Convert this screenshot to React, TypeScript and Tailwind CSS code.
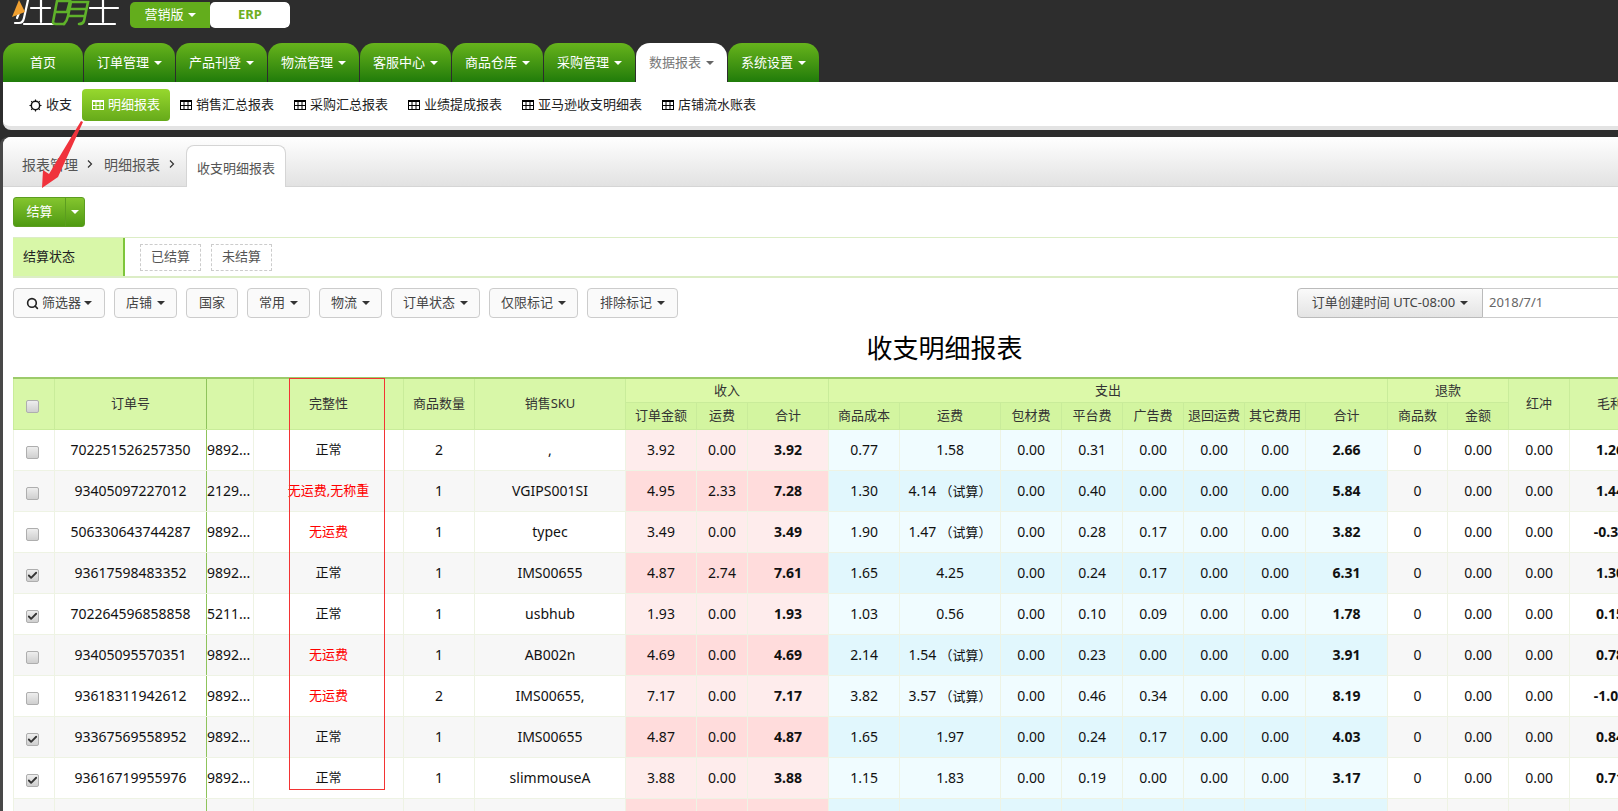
import { Check, Search } from "lucide-react";

const NAV = ["订单管理", "产品刊登", "物流管理", "客服中心", "商品仓库", "采购管理", "数据报表", "系统设置"];
const SUB = ["销售汇总报表", "采购汇总报表", "业绩提成报表", "亚马逊收支明细表", "店铺流水账表"];

const FILTERS = [
  { label: "店铺", w: "w-[63px]", caret: true },
  { label: "国家", w: "w-[52px]", caret: false },
  { label: "常用", w: "w-[63px]", caret: true },
  { label: "物流", w: "w-[63px]", caret: true },
  { label: "订单状态", w: "w-[89px]", caret: true },
  { label: "仅限标记", w: "w-[89px]", caret: true },
  { label: "排除标记", w: "w-[91px]", caret: true },
];

const ROWS = [
  { checked: false, order: "702251526257350", id: "9892...", status: "正常", qty: "2", sku: ",", income: ["3.92", "0.00", "3.92"], cost: "0.77", ship: "1.58", est: false, fees: ["0.00", "0.31", "0.00", "0.00", "0.00"], out: "2.66", profit: "1.26" },
  { checked: false, order: "93405097227012", id: "2129...", status: "无运费,无称重", qty: "1", sku: "VGIPS001SI", income: ["4.95", "2.33", "7.28"], cost: "1.30", ship: "4.14", est: true, fees: ["0.00", "0.40", "0.00", "0.00", "0.00"], out: "5.84", profit: "1.44" },
  { checked: false, order: "506330643744287", id: "9892...", status: "无运费", qty: "1", sku: "typec", income: ["3.49", "0.00", "3.49"], cost: "1.90", ship: "1.47", est: true, fees: ["0.00", "0.28", "0.17", "0.00", "0.00"], out: "3.82", profit: "-0.33" },
  { checked: true, order: "93617598483352", id: "9892...", status: "正常", qty: "1", sku: "IMS00655", income: ["4.87", "2.74", "7.61"], cost: "1.65", ship: "4.25", est: false, fees: ["0.00", "0.24", "0.17", "0.00", "0.00"], out: "6.31", profit: "1.30" },
  { checked: true, order: "702264596858858", id: "5211...", status: "正常", qty: "1", sku: "usbhub", income: ["1.93", "0.00", "1.93"], cost: "1.03", ship: "0.56", est: false, fees: ["0.00", "0.10", "0.09", "0.00", "0.00"], out: "1.78", profit: "0.15" },
  { checked: false, order: "93405095570351", id: "9892...", status: "无运费", qty: "1", sku: "AB002n", income: ["4.69", "0.00", "4.69"], cost: "2.14", ship: "1.54", est: true, fees: ["0.00", "0.23", "0.00", "0.00", "0.00"], out: "3.91", profit: "0.78" },
  { checked: false, order: "93618311942612", id: "9892...", status: "无运费", qty: "2", sku: "IMS00655,", income: ["7.17", "0.00", "7.17"], cost: "3.82", ship: "3.57", est: true, fees: ["0.00", "0.46", "0.34", "0.00", "0.00"], out: "8.19", profit: "-1.02" },
  { checked: true, order: "93367569558952", id: "9892...", status: "正常", qty: "1", sku: "IMS00655", income: ["4.87", "0.00", "4.87"], cost: "1.65", ship: "1.97", est: false, fees: ["0.00", "0.24", "0.17", "0.00", "0.00"], out: "4.03", profit: "0.84" },
  { checked: true, order: "93616719955976", id: "9892...", status: "正常", qty: "1", sku: "slimmouseA", income: ["3.88", "0.00", "3.88"], cost: "1.15", ship: "1.83", est: false, fees: ["0.00", "0.19", "0.00", "0.00", "0.00"], out: "3.17", profit: "0.71" },
];

const TH = "border border-[#c9ec9a] text-[13px] font-normal text-[#333] p-0";
const CELL = "border border-[#eef3e4] p-0 whitespace-nowrap overflow-hidden";
const TD = `${CELL} text-center text-[14px] text-[#111]`;
const LINE = "border-r-[#8fc45c]";

function Caret({ color = "border-t-white" }: { color?: string }) {
  return <span className={`inline-block border-x-[4px] border-t-[4px] border-x-transparent ${color}`} />;
}

function Chevron() {
  return (
    <svg viewBox="0 0 6 8" className="ml-[9px] mr-[11px] h-[8px] w-[6px]" fill="none" stroke="#333" strokeWidth="1.2">
      <path d="M1 0.5L4.5 4L1 7.5" />
    </svg>
  );
}

function TableIcon({ className }: { className: string }) {
  return (
    <svg viewBox="0 0 12 10" className={`h-[10px] w-[12px] ${className}`} fill="none" stroke="currentColor">
      <rect x="0.5" y="0.5" width="11" height="9" />
      <path d="M0 1.5H12M0 5.5H12M4 2V10M8 2V10" />
    </svg>
  );
}

function Logo() {
  return (
    <svg viewBox="0 0 130 34" className="h-[34px] w-[130px]" fill="none" strokeLinecap="round">
      <g stroke="#ffffff" strokeWidth="2.2">
        <path d="M28 0 L24 18 Q23 23 19 23 L15 23" />
        <path d="M21 8 L17 18" />
        <path d="M31 8 H50 M41 0 V22 M24 24 H54" />
        <path d="M90 8 H118 M103 0 V22 M89 24 H115" />
      </g>
      <g stroke="#5fb22a" strokeWidth="2.6">
        <path d="M57 1 H70 L67 12 H55 M57 1 L53 22 Q53 24 56 24 H64" />
        <path d="M72 2 H88 L84 21 Q83 24 79 24 M71 2 L68 16 Q67 21 64 24 M70 9 H86 M69 16 H84" />
      </g>
      <path d="M12 17 L19 0 L25 12 Z" fill="#f0a030" stroke="none" />
    </svg>
  );
}

function Box({ checked }: { checked: boolean }) {
  return (
    <span className="mr-[3px] mt-[3px] inline-flex h-[13px] w-[13px] items-center justify-center rounded-[2px] border border-[#aeaeae] bg-gradient-to-b from-[#eeeeee] to-[#cfcfcf] align-middle">
      {checked && <Check size={11} strokeWidth={4} className="text-[#333]" />}
    </span>
  );
}

export default function App() {
  return (
    <div className="relative flex h-[811px] w-[1618px] flex-col overflow-hidden bg-[#2d2d2d] font-['Noto_Sans','Noto_Sans_CJK_SC',sans-serif] text-[13px]">
      {/* ---- Top bar ---- */}
      <div className="flex h-[43px] shrink-0 items-start">
        <Logo />
        <div className="mt-[2px] flex h-[26px] w-[160px] overflow-hidden rounded-[5px]">
          <div className="flex w-[80px] items-center justify-center gap-[4px] bg-[#63ad1c] text-white">
            营销版 <Caret />
          </div>
          <div className="flex w-[80px] items-center justify-center rounded-[5px] bg-white font-bold text-[#6fae22]">
            ERP
          </div>
        </div>
      </div>

      {/* ---- Main nav ---- */}
      <div className="flex h-[39px] shrink-0 gap-[1px] pl-[3px]">
        <div className="flex w-[80px] items-center justify-center rounded-t-[14px] bg-gradient-to-b from-[#66b31c] to-[#1f7c0a] text-white">
          首页
        </div>
        {NAV.map((label) =>
          label === "数据报表" ? (
            <div key={label} className="flex w-[91px] items-center justify-center gap-[5px] rounded-t-[14px] bg-white text-[#777]">
              {label} <Caret color="border-t-[#666]" />
            </div>
          ) : (
            <div key={label} className="flex w-[91px] items-center justify-center gap-[5px] rounded-t-[14px] bg-gradient-to-b from-[#66b31c] to-[#1f7c0a] text-white">
              {label} <Caret />
            </div>
          ),
        )}
      </div>

      {/* ---- Sub nav ---- */}
      <div className="ml-[3px] flex h-[48px] shrink-0 items-start rounded-bl-[8px] border-b-[4px] border-[#e3e3e3] bg-white pl-[16px] pt-[7px] text-[#222]">
        <div className="flex h-[32px] items-center gap-[4px] px-[10px]">
          <svg viewBox="0 0 14 14" className="h-[13px] w-[13px]" fill="none" stroke="#111">
            <circle cx="7" cy="7" r="4.5" strokeWidth="1.6" />
            <path d="M7 0.5V2.5M7 11.5V13.5M0.5 7H2.5M11.5 7H13.5M2.4 2.4L3.8 3.8M10.2 10.2L11.6 11.6M2.4 11.6L3.8 10.2M10.2 3.8L11.6 2.4" strokeWidth="1.2" />
          </svg>
          收支
        </div>
        <div className="flex h-[32px] items-center gap-[4px] rounded-[4px] bg-gradient-to-b from-[#97d82e] to-[#66aa1a] px-[10px] text-white">
          <TableIcon className="text-white" />
          明细报表
        </div>
        {SUB.map((label) => (
          <div key={label} className="flex h-[32px] items-center gap-[4px] px-[10px]">
            <TableIcon className="text-black" />
            {label}
          </div>
        ))}
      </div>

      {/* ---- Page panel ---- */}
      <div className="ml-[3px] mt-[7px] min-h-0 flex-1 overflow-hidden rounded-tl-[8px] bg-white shadow-[-3px_0_0_#484848]">
        <div className="flex h-[50px] items-end border-b border-[#d5d5d5] bg-gradient-to-b from-white to-[#e2e2e2] pl-[19px] text-[#555]">
          <div className="flex h-[42px] items-center pb-[2px] text-[14px]">
            <span>报表管理</span>
            <Chevron />
            <span>明细报表</span>
            <Chevron />
          </div>
          <div className="-mb-px flex h-[42px] w-[100px] items-center justify-center rounded-t-[8px] border border-b-0 border-[#d5d5d5] bg-white pt-[4px]">
            收支明细报表
          </div>
        </div>

        <div className="ml-[10px] mt-[10px] flex h-[30px] w-[72px] overflow-hidden rounded-[3px] border border-[#5c9d20] bg-gradient-to-b from-[#84c52e] to-[#4f9a12] text-white">
          <div className="flex w-[51px] items-center justify-center">结算</div>
          <div className="flex flex-1 items-center justify-center border-l border-[#5c9d20]">
            <Caret />
          </div>
        </div>

        <div className="ml-[10px] mt-[10px] flex h-[41px] border-y-2 border-t-[1px] border-y-[#dcedc6] text-[#333]">
          <div className="flex w-[112px] items-center border-r-2 border-[#7ec53b] bg-[#d8f7a8] pl-[10px] text-[#222]">
            结算状态
          </div>
          <div className="flex items-center gap-[10px] pl-[15px] text-[#555]">
            <span className="flex h-[27px] w-[61px] items-center justify-center border border-dashed border-[#cccccc]">已结算</span>
            <span className="flex h-[27px] w-[61px] items-center justify-center border border-dashed border-[#cccccc]">未结算</span>
          </div>
        </div>

        <div className="mt-[10px] flex h-[30px] gap-[9px] pl-[10px] text-[#444]">
          <div className="flex w-[92px] items-center justify-center gap-[3px] rounded-[4px] border border-[#cccccc] bg-[#fafafa]">
            <Search size={13} strokeWidth={3} className="text-[#222]" />
            筛选器 <Caret color="border-t-[#333]" />
          </div>
          {FILTERS.map((f) => (
            <div key={f.label} className={`flex ${f.w} items-center justify-center gap-[5px] rounded-[4px] border border-[#cccccc] bg-[#fafafa]`}>
              {f.label}
              {f.caret && <Caret color="border-t-[#333]" />}
            </div>
          ))}
          <div className="ml-auto flex w-[321px] gap-0">
            <div className="flex w-[186px] items-center justify-center gap-[5px] rounded-l-[4px] border border-[#bbbbbb] bg-gradient-to-b from-[#fafafa] to-[#e4e4e4]">
              订单创建时间 UTC-08:00 <Caret color="border-t-[#333]" />
            </div>
            <div className="flex flex-1 items-center border-y border-[#cccccc] pl-[6px] text-[#666]">2018/7/1</div>
          </div>
        </div>

        <div className="flex h-[59px] items-center justify-center pl-[268px] pt-[1px] text-[26px] text-black">收支明细报表</div>

        {/* ---- Report table ---- */}
        <div className="ml-[10px] overflow-hidden">
          <table className="w-[1637px] table-fixed border-collapse border-t-2 border-t-[#9ccb6a]">
            <colgroup>
              <col className="w-[41px]" />
              <col className="w-[152px]" />
              <col className="w-[47px]" />
              <col className="w-[150px]" />
              <col className="w-[71px]" />
              <col className="w-[151px]" />
              <col className="w-[71px]" />
              <col className="w-[51px]" />
              <col className="w-[81px]" />
              <col className="w-[71px]" />
              <col className="w-[101px]" />
              <col className="w-[61px]" />
              <col className="w-[61px]" />
              <col className="w-[61px]" />
              <col className="w-[61px]" />
              <col className="w-[61px]" />
              <col className="w-[82px]" />
              <col className="w-[60px]" />
              <col className="w-[61px]" />
              <col className="w-[61px]" />
              <col className="w-[81px]" />
            </colgroup>
            <thead className="bg-[#d8f7a8]">
              <tr className="h-[24px]">
                <th rowSpan={2} className={TH}><Box checked={false} /></th>
                <th rowSpan={2} className={`${TH} ${LINE}`}>订单号</th>
                <th rowSpan={2} className={TH} />
                <th rowSpan={2} className={TH}>完整性</th>
                <th rowSpan={2} className={TH}>商品数量</th>
                <th rowSpan={2} className={TH}>销售SKU</th>
                <th colSpan={3} className={`${TH} bg-[#dcf9a9]`}>收入</th>
                <th colSpan={8} className={`${TH} bg-[#dcf9a9]`}>支出</th>
                <th colSpan={2} className={`${TH} bg-[#dcf9a9]`}>退款</th>
                <th rowSpan={2} className={TH}>红冲</th>
                <th rowSpan={2} className={TH}>毛利</th>
              </tr>
              <tr className="h-[27px] bg-[#d3f5a0]">
                {["订单金额", "运费", "合计", "商品成本", "运费", "包材费", "平台费", "广告费", "退回运费", "其它费用", "合计", "商品数", "金额"].map((h, i) => (
                  <th key={i} className={TH}>{h}</th>
                ))}
              </tr>
            </thead>
            <tbody>
              {ROWS.map((r, i) => {
                const even = i % 2 === 1;
                const income = even ? "bg-[#ffdcdc]" : "bg-[#feecec]";
                const expense = even ? "bg-[#e1f7fd]" : "bg-[#f0fcff]";
                return (
                  <tr key={r.order} className={`h-[41px] ${even ? "bg-[#f7f7f7]" : "bg-white"}`}>
                    <td className={TD}><Box checked={r.checked} /></td>
                    <td className={`${TD} ${LINE}`}>{r.order}</td>
                    <td className={`${CELL} text-left text-[14px] text-[#111]`}>{r.id}</td>
                    <td className={`${CELL} text-center text-[13px] ${r.status === "正常" ? "text-[#111]" : "text-[#ff0000]"}`}>{r.status}</td>
                    <td className={TD}>{r.qty}</td>
                    <td className={TD}>{r.sku}</td>
                    <td className={`${TD} ${income}`}>{r.income[0]}</td>
                    <td className={`${TD} ${income}`}>{r.income[1]}</td>
                    <td className={`${TD} ${income} font-bold`}>{r.income[2]}</td>
                    <td className={`${TD} ${expense}`}>{r.cost}</td>
                    <td className={`${TD} ${expense}`}>{r.ship}{r.est && <span className="text-[13px]"> （试算）</span>}</td>
                    {r.fees.map((fee, j) => (
                      <td key={j} className={`${TD} ${expense}`}>{fee}</td>
                    ))}
                    <td className={`${TD} ${expense} font-bold`}>{r.out}</td>
                    <td className={TD}>0</td>
                    <td className={TD}>0.00</td>
                    <td className={TD}>0.00</td>
                    <td className={`${TD} font-bold`}>{r.profit}</td>
                  </tr>
                );
              })}
              <tr className="h-[41px] bg-[#f7f7f7]">
                <td className={TD} />
                <td className={`${TD} ${LINE}`} />
                <td className={TD} />
                <td className={TD} />
                <td className={TD} />
                <td className={TD} />
                <td className={`${TD} bg-[#ffdcdc]`} />
                <td className={`${TD} bg-[#ffdcdc]`} />
                <td className={`${TD} bg-[#ffdcdc]`} />
                {[0, 1, 2, 3, 4, 5, 6, 7].map((n) => (
                  <td key={n} className={`${TD} bg-[#e1f7fd]`} />
                ))}
                <td className={TD} />
                <td className={TD} />
                <td className={TD} />
                <td className={TD} />
              </tr>
            </tbody>
          </table>
        </div>
      </div>

      {/* ---- Annotations drawn over the screenshot ---- */}
      <div className="absolute left-[289px] top-[378px] h-[412px] w-[96px] border border-[#f33333]" />
      <svg className="absolute left-0 top-0 h-[811px] w-[1618px]" viewBox="0 0 1618 811" fill="#f0323c">
        <path d="M81 121 L83 122 L58 177 L42 188 L43 170 L49 174 Z" />
      </svg>
    </div>
  );
}
